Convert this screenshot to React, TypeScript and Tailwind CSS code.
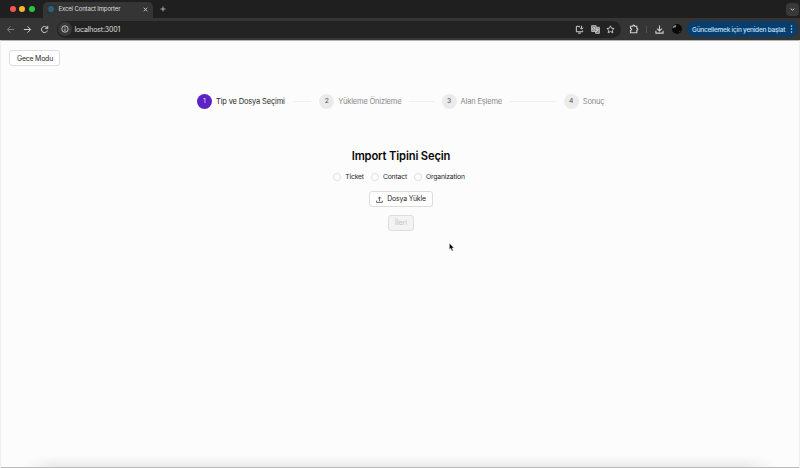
import React from 'react';

function Toolbar() {
  return (
    <div className="flex h-[22px] shrink-0 items-center bg-[#353535] text-[#d0d0d0]">
      <svg className="ml-[6px] h-[9px] w-[9px] shrink-0 text-[#808080]" viewBox="0 0 10 10" fill="none" stroke="currentColor" strokeWidth="1.1"><path d="M9 5H1.5M5 1.5 1.5 5 5 8.5" /></svg>
      <svg className="ml-[8px] h-[9px] w-[9px] shrink-0" viewBox="0 0 10 10" fill="none" stroke="currentColor" strokeWidth="1.1"><path d="M1 5h7.5M5 1.5 8.5 5 5 8.5" /></svg>
      <svg className="ml-[8px] h-[9px] w-[9px] shrink-0" viewBox="0 0 10 10" fill="none" stroke="currentColor" strokeWidth="1.1"><path d="M8.2 6.2A3.4 3.4 0 1 1 7.5 2.7L8.5 3.7M8.6 1v2.8H5.8" /></svg>
      <div className="ml-[8px] flex h-[17px] w-[564px] shrink-0 items-center rounded-full bg-[#232323]">
        <span className="ml-[1px] flex h-[14px] w-[14px] items-center justify-center rounded-full bg-[#393939]">
          <svg className="h-[8px] w-[8px]" viewBox="0 0 10 10" fill="none" stroke="currentColor" strokeWidth="1.1"><circle cx="5" cy="5" r="4" /><path d="M5 4.5v3M5 2.5v1" /></svg>
        </span>
        <span className="ml-[2.5px] pt-px text-[7px] leading-none tracking-[-0.16px] text-[#dedede]">localhost:3001</span>
        <svg className="ml-auto h-[9px] w-[9px]" viewBox="0 0 10 10" fill="none" stroke="currentColor" strokeWidth="1.1"><path d="M5.5 1.5h-4v6h7V6M3.5 9h3M7.3.8v3.7M5.6 3l1.7 1.7L9 3" /></svg>
        <svg className="ml-[6.5px] h-[9px] w-[9px]" viewBox="0 0 10 10" fill="none" stroke="currentColor" strokeWidth=".9"><path d="M.7.7h4.8l1 6.5H.7zM5.8 2.5h3.5v6.8H5.2l-.4-2" fill="#777" /><path d="M4.5 3.2A1.6 1.6 0 1 0 4.6 5V4H3.2M6.2 4.8h2.6M7.5 4v.8c0 1-.5 1.8-1.2 2.3M6.7 5c.2.9.8 1.6 1.8 2" /></svg>
        <svg className="ml-[6.5px] mr-[6px] h-[9px] w-[9px]" viewBox="0 0 10 10" fill="none" stroke="currentColor" strokeWidth="1"><path d="m5 1 1.2 2.6 2.8.3L7 5.8l.6 2.9L5 7.2 2.4 8.7 3 5.8 1 3.9l2.8-.3z" /></svg>
      </div>
      <svg className="ml-[8px] h-[10px] w-[10px] shrink-0" viewBox="0 0 10 10" fill="none" stroke="currentColor" strokeWidth="1.1"><path d="M1.5 2.2h2.2c0-1.4 2-1.4 2 0h2.1v2.1c1.3 0 1.3 2 0 2v2.4H1.5V6.5c1.5 0 1.5-2.1 0-2.1z" /></svg>
      <span className="ml-[6.5px] h-[7px] w-px bg-[#505050]" />
      <svg className="ml-[8.5px] h-[9px] w-[9px] shrink-0" viewBox="0 0 10 10" fill="none" stroke="currentColor" strokeWidth="1.2"><path d="M5 .5v6M2.3 3.9 5 6.6l2.7-2.7M1 6.5V9h8V6.5" /></svg>
      <svg className="ml-[7.5px] h-[10px] w-[10px] shrink-0" viewBox="0 0 10 10"><circle cx="5" cy="5" r="4.9" fill="#090909" /><path d="M.5 4.2C1 2 2.6 1 4.7 1.1L3.8 2.2l.4.7-1.8.6z" fill="#909083" /><path d="m6.7 8 1.7-1.5-.3 1.8z" fill="#4b4843" /></svg>
      <div className="ml-[5.5px] flex h-[15.5px] w-[111px] shrink-0 items-center rounded-full bg-[#073e6d] pl-[5px] text-[#c4e3fa]">
        <span className="whitespace-nowrap pt-[2px] text-[6.5px] font-medium leading-none tracking-[-0.23px]">Güncellemek için yeniden başlat</span>
        <svg className="ml-auto mr-[5px] h-[8px] w-[3px] shrink-0" viewBox="0 0 3 8" fill="currentColor"><circle cx="1.5" cy="1" r=".75" /><circle cx="1.5" cy="4" r=".75" /><circle cx="1.5" cy="7" r=".75" /></svg>
      </div>
    </div>
  );
}

function TabStrip() {
  return (
    <div className="flex h-[18px] shrink-0 items-center bg-[#1e1f1e]">
      <div className="ml-[9.7px] flex gap-[3.6px]">
        <span className="h-[6px] w-[6px] rounded-full bg-[#f85650]" />
        <span className="h-[6px] w-[6px] rounded-full bg-[#f7b42c]" />
        <span className="h-[6px] w-[6px] rounded-full bg-[#27c640]" />
      </div>
      <div className="ml-[8.1px] flex h-[16px] w-[110px] items-center self-end rounded-t-[5px] bg-[#353535] pb-[2px]">
        <svg className="ml-[4px] h-[8px] w-[8px]" viewBox="0 0 12 12" fill="none" stroke="#397ba0" strokeWidth=".8"><rect width="12" height="12" rx="2" fill="#263039" stroke="none" /><ellipse cx="6" cy="6" rx="5" ry="2" /><ellipse cx="6" cy="6" rx="5" ry="2" transform="rotate(60 6 6)" /><ellipse cx="6" cy="6" rx="5" ry="2" transform="rotate(120 6 6)" /><circle cx="6" cy="6" r=".8" /></svg>
        <span className="ml-[3.5px] whitespace-nowrap text-[6px] leading-none tracking-[-0.14px] text-[#dedede]">Excel Contact Importer</span>
        <svg className="ml-auto mr-[5px] h-[5px] w-[5px]" viewBox="0 0 5 5" stroke="#e0e0e0" strokeWidth=".8"><path d="m.7.7 3.6 3.6m0-3.6L.7 4.3" /></svg>
      </div>
      <svg className="ml-[7px] h-[6px] w-[6px]" viewBox="0 0 6 6" stroke="#c8c8c8" strokeWidth=".8"><path d="M3 .5v5M.5 3h5" /></svg>
      <span className="ml-auto mr-[1px] flex h-[13px] w-[13px] items-center justify-center rounded-[4px] bg-[#383838]">
        <svg className="h-[5px] w-[5px]" viewBox="0 0 5 5" fill="none" stroke="#dedede" strokeWidth=".9"><path d="m.7 1.5 1.8 1.8 1.8-1.8" /></svg>
      </span>
    </div>
  );
}

function Step({ number, label, active = false, className }: { number: number; label: string; active?: boolean; className: string }) {
  return (
    <div className={`flex items-center ${className}`}>
      <span className={`flex h-[15px] w-[15px] shrink-0 items-center justify-center rounded-full pt-px text-[6.8px] leading-none ${active ? 'bg-[#5b22c4] text-[#e8dfff]' : 'bg-[#ebebeb] text-[#505050]'}`}>{number}</span>
      <span className={`ml-[4px] whitespace-nowrap pt-px text-[7.5px] leading-none tracking-[-0.17px] ${active ? 'text-[#292929]' : 'text-[#888888]'}`}>{label}</span>
      {number < 4 && <span className="ml-[8px] mr-[8px] h-px grow bg-[#f0f0f0]" />}
    </div>
  );
}

function ImportType({ label }: { label: string }) {
  return (
    <label className="flex items-center gap-[4px]">
      <span className="h-[8px] w-[8px] rounded-full border border-[#dedede] bg-white" />
      <span className="pt-px">{label}</span>
    </label>
  );
}

export default function App() {
  return (
    <div className="relative flex h-[468px] w-[800px] flex-col overflow-hidden bg-[#fcfcfc] font-['Inter','Liberation_Sans',sans-serif] text-[#292929]">
      <TabStrip />
      <Toolbar />
      <main className="flex grow flex-col border-x border-t border-x-[#eeeeee] border-t-[#b5b5b5]">
        <button className="ml-[8px] mt-[9px] h-[16px] w-[51px] rounded-[3px] border border-[#dddddd] bg-white pl-px pt-[2px] text-[6.9px] leading-none tracking-[-0.18px]">Gece Modu</button>
        <div className="ml-[196px] mt-[27px] flex h-[16px] items-center">
          <Step number={1} label="Tip ve Dosya Seçimi" active className="w-[122.3px]" />
          <Step number={2} label="Yükleme Önizleme" className="w-[122.3px]" />
          <Step number={3} label="Alan Eşleme" className="w-[122.2px]" />
          <Step number={4} label="Sonuç" className="w-[42px]" />
        </div>
        <section className="flex flex-col items-center pl-[2px] pt-[40px]">
          <h1 className="whitespace-nowrap text-[11.2px] font-semibold leading-[15px] tracking-[-0.15px] text-[#080808]">Import Tipini Seçin</h1>
          <div className="mt-[7.5px] flex h-[10px] items-center gap-[7px] pr-[4px] text-[6.8px] leading-none tracking-[-0.17px]">
            <ImportType label="Ticket" />
            <ImportType label="Contact" />
            <ImportType label="Organization" />
          </div>
          <button className="mt-[9.5px] flex h-[16px] w-[64px] items-center justify-center gap-[4px] rounded-[3px] border border-[#dddddd] bg-white text-[6.9px] leading-none tracking-[-0.15px]">
            <svg className="h-[7px] w-[7px]" viewBox="0 0 8 8" fill="none" stroke="currentColor" strokeWidth=".8"><path d="M4 6V1.2M2.3 2.9 4 1.2l1.7 1.7M.7 5.3v2h6.6v-2" /></svg>
            <span className="pt-px">Dosya Yükle</span>
          </button>
          <button disabled className="mt-[8.4px] h-[16px] w-[26px] rounded-[3px] border border-[#dddddd] bg-[#f3f3f3] pt-px text-[6.9px] leading-none text-[#bfbfbf]">İleri</button>
        </section>
        <div className="mx-[24px] mt-auto h-[11px] bg-linear-to-b from-transparent to-[#eaeaea] [mask-image:linear-gradient(to_right,transparent,black_28px,black_720px,transparent)]" />
        <div className="h-px bg-[#b9b9b9]" />
      </main>
      <svg className="absolute left-[448.5px] top-[243px] h-[9px] w-[6px]" viewBox="0 0 6 9" fill="#080808" stroke="#ffffff" strokeWidth=".35"><path d="M.4.3v6.2l1.4-1.2 1.1 2.8 1.2-.5-1.1-2.7h2z" /></svg>
    </div>
  );
}
